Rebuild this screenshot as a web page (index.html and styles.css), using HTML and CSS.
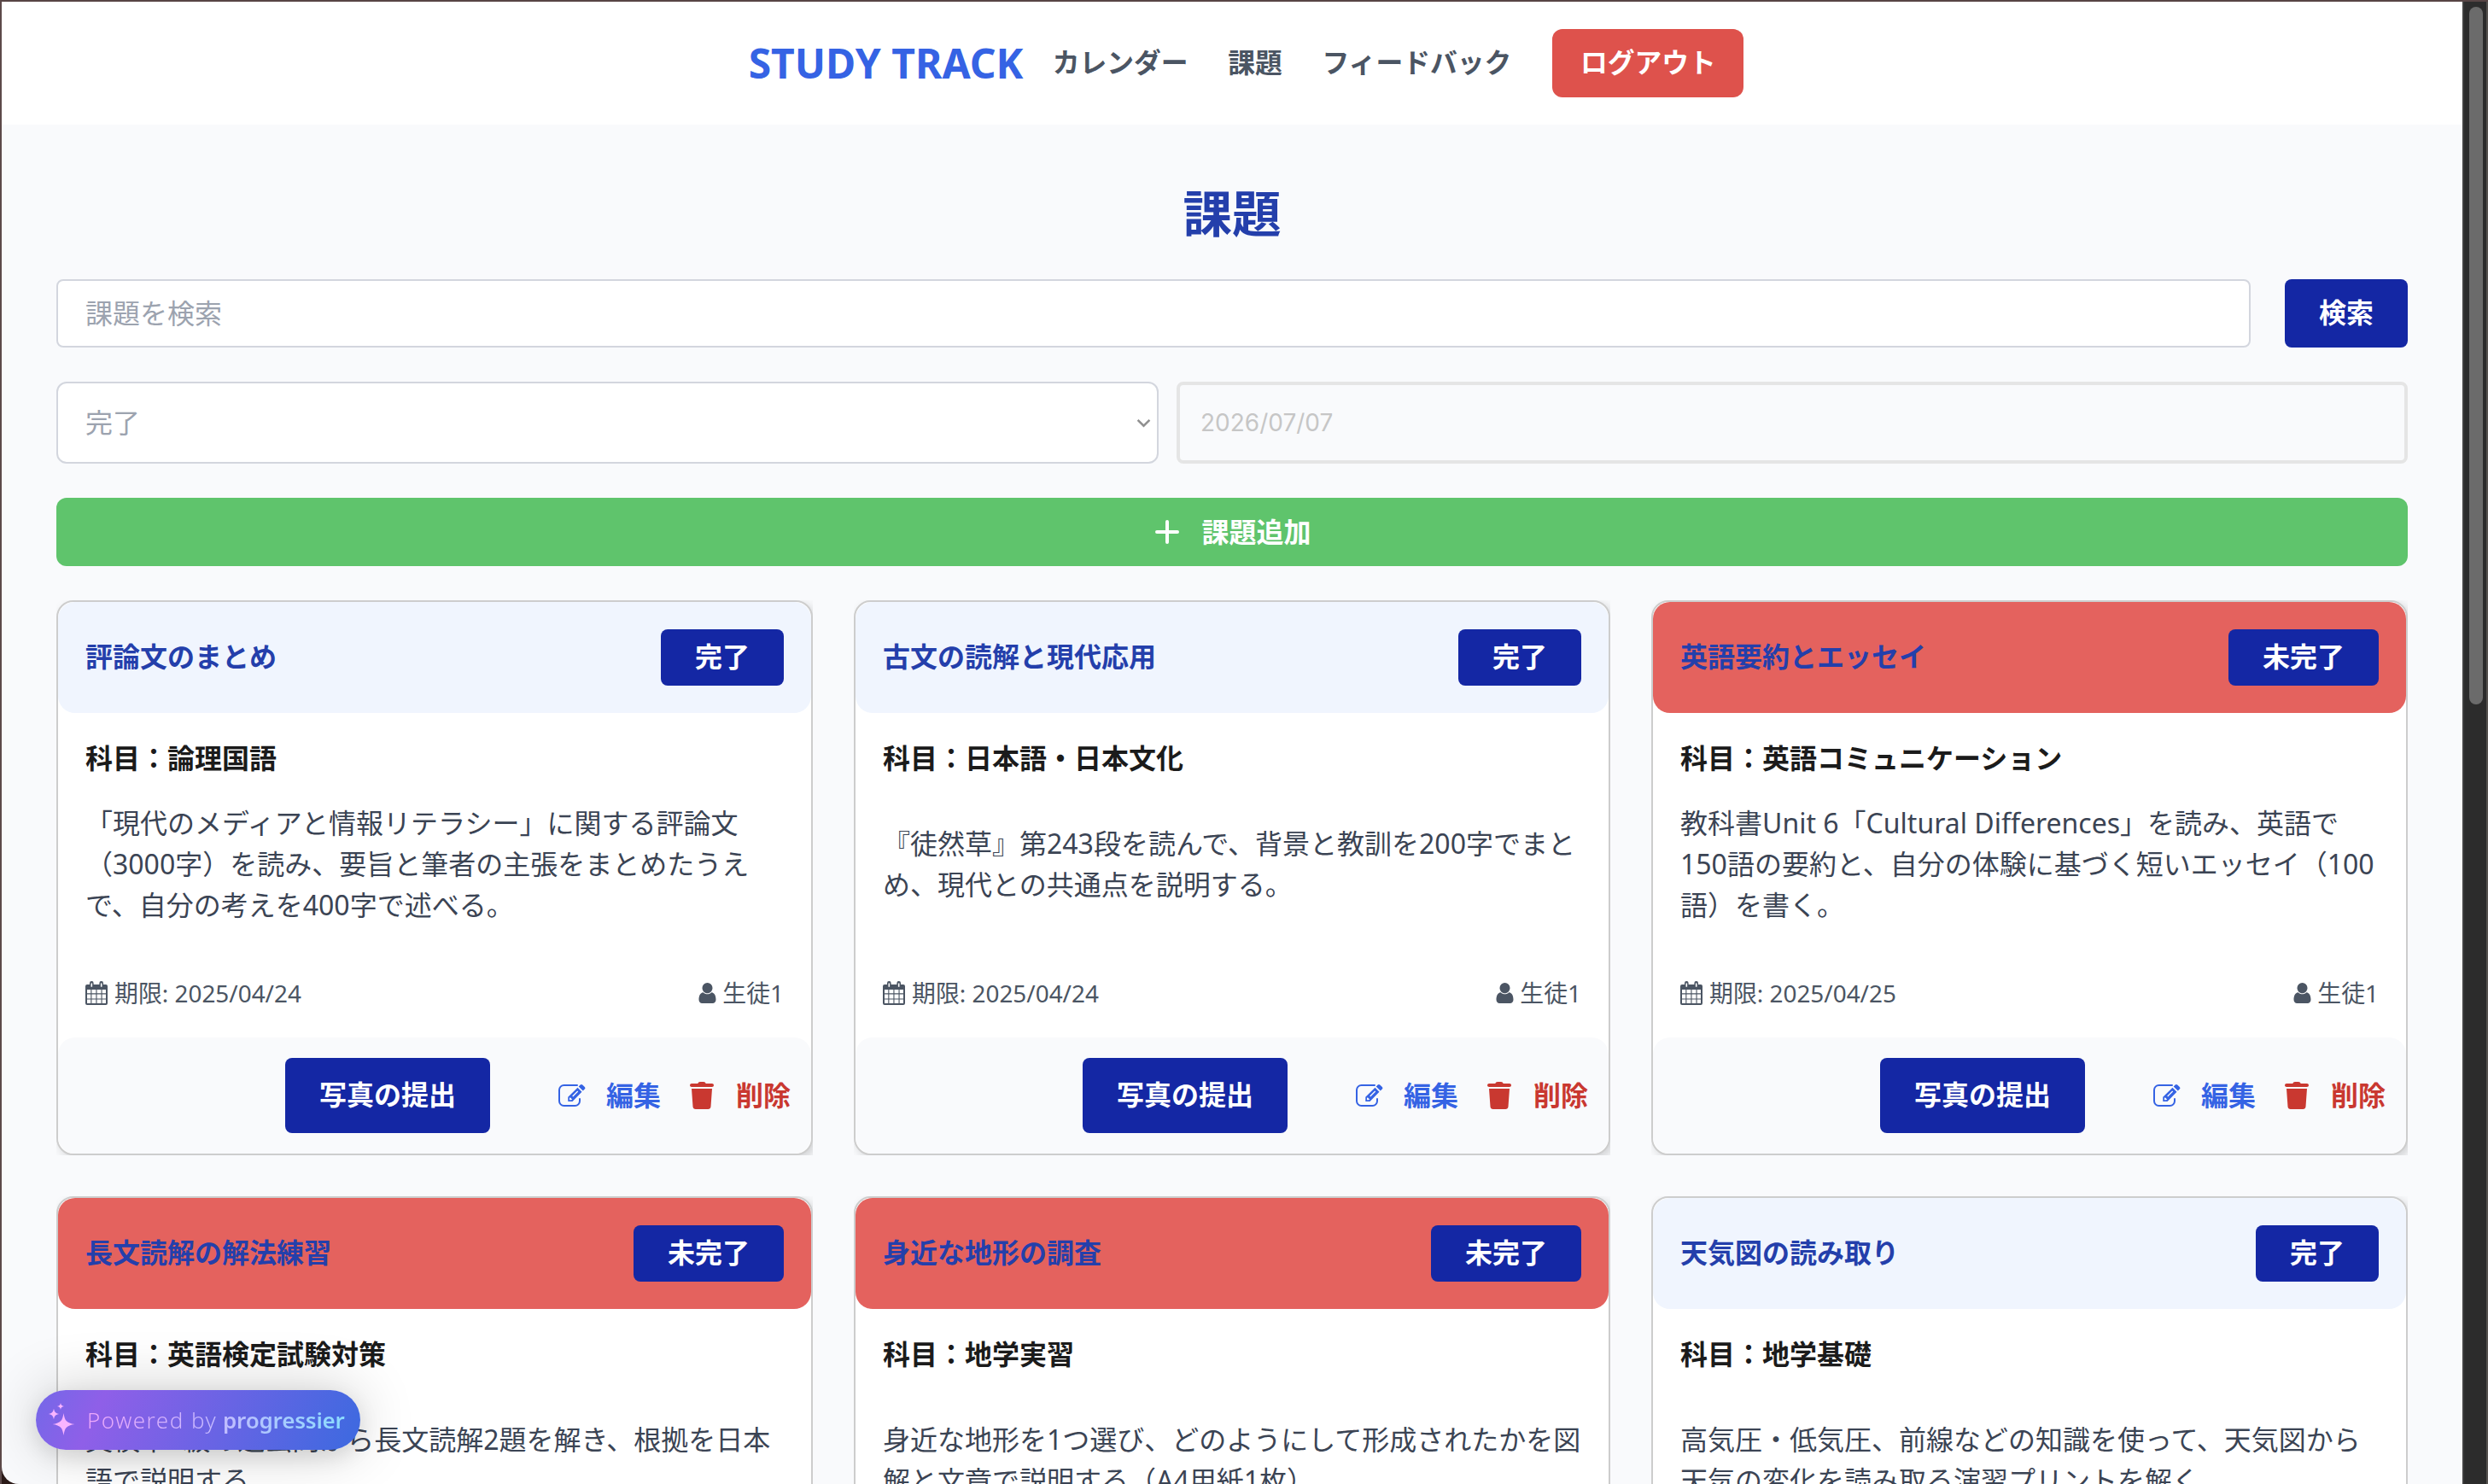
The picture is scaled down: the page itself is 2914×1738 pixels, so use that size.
FILE: index.html
```html
<!DOCTYPE html>
<html lang="ja">
<head>
<meta charset="utf-8">
<title>STUDY TRACK - 課題</title>
<link rel="stylesheet" href="styles.css">
</head>
<body>
<svg class="sprite" aria-hidden="true">
  <symbol id="i-cal" viewBox="0 0 26 28"><path fill="currentColor" fill-rule="evenodd" d="M2 4h3V2.300a2.300 2.300 0 0 1 4.600 0V4h6.800V2.300a2.300 2.300 0 0 1 4.600 0V4h3a2 2 0 0 1 2 2v20a2 2 0 0 1-2 2H2a2 2 0 0 1-2-2V6a2 2 0 0 1 2-2zM6.500 2.500v4.300h1.600V2.500zM17.900 2.500v4.300h1.600V2.500zM2 10v4.300h4.300V10zM7.400 10v4.300h5V10zM13.500 10v4.300h5V10zM19.600 10v4.300H24V10zM2 15.400v5h4.300v-5zM7.400 15.400v5h5v-5zM13.500 15.400v5h5v-5zM19.600 15.400v5H24v-5zM2 21.500V26h4.300v-4.500zM7.400 21.500V26h5v-4.500zM13.500 21.500V26h5v-4.500zM19.600 21.500V26H24v-4.500z"/></symbol>
  <symbol id="i-user" viewBox="0 0 20 24"><path fill="currentColor" d="M10 0a6 6 0 0 1 6 6c0 3.300-2.700 6.300-6 6.300S4 9.300 4 6a6 6 0 0 1 6-6zM5.200 11.200c1.300 1.300 3 2.100 4.800 2.100s3.500-.8 4.800-2.100c3.700.4 5.200 4.300 5.200 8.500 0 2.500-1.600 4.300-3.800 4.300H3.800C1.600 24 0 22.200 0 19.700c0-4.200 1.500-8.100 5.200-8.500z"/></symbol>
  <symbol id="i-edit" viewBox="0 0 32 28"><path fill="none" stroke="currentColor" stroke-width="2" stroke-linecap="round" d="M22 2H6.500A5.500 5.500 0 0 0 1 7.500v13A5.500 5.500 0 0 0 6.500 26h13a5.500 5.500 0 0 0 5.500-5.500V18"/><path fill="currentColor" fill-rule="evenodd" d="M22.500 4.800l5 5L16.500 21H11.300v-5.200zM13 17v2.300h2.300l.8-.8-2.300-2.300zM16.200 14.500l1 .9 6-6-1-.9zM23.700 3.500l2-2a1.800 1.800 0 0 1 2.500 0l2.600 2.600a1.800 1.800 0 0 1 0 2.500l-2 2z"/></symbol>
  <symbol id="i-trash" viewBox="0 0 28 32"><path fill="currentColor" d="M2 2h7.300C9.800.8 10.500 0 12 0h4c1.500 0 2.200.8 2.700 2H26c1 0 2 .9 2 2s-1 2-2 2H2C1 6 0 5.100 0 4s1-2 2-2zM2 8h24l-1.500 21c-.1 1.700-1.500 3-3.200 3H6.700c-1.700 0-3.100-1.300-3.200-3z"/></symbol>
</svg>

<div class="window">
<div class="page">
  <header class="topbar">
    <div class="logo">STUDY TRACK</div>
    <nav class="nav"><a>カレンダー</a><a>課題</a><a>フィードバック</a></nav>
    <button class="logout">ログアウト</button>
  </header>

  <main class="main">
    <h1 class="title">課題</h1>
    <div class="search-row">
      <div class="field search">課題を検索</div>
      <button class="btn search-btn">検索</button>
    </div>
    <div class="filter-row">
      <div class="field select">完了<svg class="chev" viewBox="0 0 16 10"><path d="M1.500 1.500L8 8l6.500-6.500" fill="none" stroke="#909090" stroke-width="2.400"/></svg></div>
      <div class="date">2026/07/07</div>
    </div>
    <button class="add"><svg class="plus" viewBox="0 0 28 28"><path d="M14 2v24M2 14h24" stroke="#fff" stroke-width="4" stroke-linecap="round"/></svg>課題追加</button>

    <div class="grid">
      <div class="cell"><article class="card">
        <div class="card-head"><h2 class="name">評論文のまとめ</h2><button class="btn state">完了</button></div>
        <div class="card-body">
          <h3 class="subject">科目：論理国語</h3>
          <div class="desc"><p>「現代のメディアと情報リテラシー」に関する評論文（3000字）を読み、要旨と筆者の主張をまとめたうえで、自分の考えを400字で述べる。</p></div>
          <div class="meta"><span class="due"><svg class="cal"><use href="#i-cal"/></svg>期限: 2025/04/24</span><span class="who"><svg class="user"><use href="#i-user"/></svg>生徒1</span></div>
        </div>
        <div class="card-foot"><button class="btn photo">写真の提出</button><a class="edit"><svg><use href="#i-edit"/></svg>編集</a><a class="del"><svg><use href="#i-trash"/></svg>削除</a></div>
      </article></div>

      <div class="cell"><article class="card">
        <div class="card-head"><h2 class="name">古文の読解と現代応用</h2><button class="btn state">完了</button></div>
        <div class="card-body">
          <h3 class="subject">科目：日本語・日本文化</h3>
          <div class="desc"><p>『徒然草』第243段を読んで、背景と教訓を200字でまとめ、現代との共通点を説明する。</p></div>
          <div class="meta"><span class="due"><svg class="cal"><use href="#i-cal"/></svg>期限: 2025/04/24</span><span class="who"><svg class="user"><use href="#i-user"/></svg>生徒1</span></div>
        </div>
        <div class="card-foot"><button class="btn photo">写真の提出</button><a class="edit"><svg><use href="#i-edit"/></svg>編集</a><a class="del"><svg><use href="#i-trash"/></svg>削除</a></div>
      </article></div>

      <div class="cell"><article class="card">
        <div class="card-head todo"><h2 class="name">英語要約とエッセイ</h2><button class="btn state">未完了</button></div>
        <div class="card-body">
          <h3 class="subject">科目：英語コミュニケーション</h3>
          <div class="desc"><p>教科書Unit 6「Cultural Differences」を読み、英語で150語の要約と、自分の体験に基づく短いエッセイ（100語）を書く。</p></div>
          <div class="meta"><span class="due"><svg class="cal"><use href="#i-cal"/></svg>期限: 2025/04/25</span><span class="who"><svg class="user"><use href="#i-user"/></svg>生徒1</span></div>
        </div>
        <div class="card-foot"><button class="btn photo">写真の提出</button><a class="edit"><svg><use href="#i-edit"/></svg>編集</a><a class="del"><svg><use href="#i-trash"/></svg>削除</a></div>
      </article></div>

      <div class="cell"><article class="card">
        <div class="card-head todo"><h2 class="name">長文読解の解法練習</h2><button class="btn state">未完了</button></div>
        <div class="card-body">
          <h3 class="subject">科目：英語検定試験対策</h3>
          <div class="desc"><p>英検準1級の過去問から長文読解2題を解き、根拠を日本語で説明する。</p></div>
        </div>
      </article></div>

      <div class="cell"><article class="card">
        <div class="card-head todo"><h2 class="name">身近な地形の調査</h2><button class="btn state">未完了</button></div>
        <div class="card-body">
          <h3 class="subject">科目：地学実習</h3>
          <div class="desc"><p>身近な地形を1つ選び、どのようにして形成されたかを図解と文章で説明する（A4用紙1枚）</p></div>
        </div>
      </article></div>

      <div class="cell"><article class="card">
        <div class="card-head"><h2 class="name">天気図の読み取り</h2><button class="btn state">完了</button></div>
        <div class="card-body">
          <h3 class="subject">科目：地学基礎</h3>
          <div class="desc"><p>高気圧・低気圧、前線などの知識を使って、天気図から天気の変化を読み取る演習プリントを解く</p></div>
        </div>
      </article></div>
    </div>
  </main>
</div>
<div class="scroll"><div class="thumb"></div></div>
</div>

<div class="badge">
  <svg class="spark" viewBox="0 0 32 40"><path fill="#f9b4ff" d="M18.500 12c1.300 9 3.500 11.500 13 13-9.500 1.500-11.700 4-13 13-1.300-9-3.500-11.500-13-13 9.500-1.500 11.700-4 13-13zM7 6.500c.8 4.400 2 5.700 6.500 6.500-4.500.8-5.700 2-6.500 6.500C6.200 15 5 13.800.5 13 5 12.200 6.200 10.900 7 6.500zM15 0c.5 2.700 1.300 3.500 4 4-2.700.5-3.500 1.300-4 4-.5-2.700-1.300-3.500-4-4 2.700-.5 3.500-1.300 4-4z"/></svg>
  <span class="badge-text"><span class="by">Powered by</span> <b>progressier</b></span>
</div>
</body>
</html>
```
FILE: styles.css
```css
* { box-sizing: border-box; margin: 0; padding: 0; }
body {
  width: 2914px; height: 1738px; overflow: hidden; background: #2b1a18;
  font-family: "Noto Sans", "Noto Sans CJK JP", sans-serif;
  font-size: 32px; line-height: 48px; color: #3b4454;
}
button { font: inherit; border: 0; display: block; white-space: nowrap; }
svg { display: block; flex: none; }
.sprite { position: absolute; width: 0; height: 0; }
.window {
  height: 1738px; display: flex; border-top: 2px solid #574545;
  border-left: 2px solid #5d4a4a;
}
.page { width: 2882px; height: 1736px; overflow: hidden; background: #f9fafc; border-bottom-left-radius: 20px; }
.scroll { width: 30px; background: #2c2c2c; border-left: 2px solid #404040; border-right: 2px solid #55524f; padding: 6px 4px 0 6px; }
.thumb { width: 16px; height: 817px; border-radius: 8px; background: #6b6b6b; }

.topbar {
  height: 144px; background: #fff; display: flex; align-items: center; justify-content: center;
  padding-left: 33px;
}
.logo { font-size: 48px; font-weight: 700; color: #3563e4; white-space: nowrap; width: 324px; }
.nav { display: flex; gap: 46.600px; font-size: 31.800px; font-weight: 600; color: #4b5563; margin: 0 48px 0 32px; padding-bottom: 2px; white-space: nowrap; }
.logout { background: #de524c; color: #fff; height: 80px; width: 224px; border-radius: 12px; font-size: 31.800px; font-weight: 600; padding-bottom: 2px; }

.main { padding: 0 64px; }
.title { font-size: 57.600px; line-height: 86px; font-weight: 700; color: #243fab; text-align: center; padding: 61px 0 34px; }
.btn { background: #1427a4; color: #fff; font-weight: 600; border-radius: 8px; text-align: center; padding-bottom: 2px; }
.search-row { display: flex; gap: 40px; margin-bottom: 40px; }
.field { background: #fff; border: 2px solid #d3d6de; border-radius: 8px; color: #9ca3af; padding: 0 32px; display: flex; align-items: center; }
.search { flex: 1; height: 80px; }
.search-btn { width: 144px; height: 80px; }
.filter-row { display: flex; gap: 21px; height: 96px; margin-bottom: 40px; }
.select { width: 1291px; border-radius: 12px; justify-content: space-between; padding-right: 7px; }
.chev { width: 17px; height: 11px; }
.date { flex: 1; border: 4px solid #e5e5e5; border-radius: 8px; font-family: Inter, sans-serif; font-size: 28px; line-height: 88px; color: #c6c6c6; padding-left: 24px; }
.add { width: 100%; height: 80px; border-radius: 12px; background: #5fc46c; color: #fff; font-weight: 600; display: flex; align-items: center; justify-content: center; gap: 26px; margin-bottom: 40px; padding-left: 3px; }
.plus { width: 28px; height: 28px; }

.grid { display: grid; grid-template-columns: repeat(3, 886px); gap: 48px; }
.cell { height: 650px; overflow: hidden; }
.card {
  height: 650px; border: 2px solid #cdcdcd; border-radius: 20px; background: #fff;
  box-shadow: 4px 4px 12px rgba(0, 0, 0, .16); display: flex; flex-direction: column;
}
.card-head { height: 130px; background: #f0f5fe; border-radius: 20px; padding: 32px; display: flex; justify-content: space-between; align-items: center; }
.card-head.todo { background: #e4625e; }
.name { font-size: 32px; font-weight: 600; color: #243fab; padding-bottom: 2px; }
.state { height: 66px; padding: 0 40px 2px; line-height: 62px; }
.card-body { flex: 1; padding: 29px 32px 0; }
.subject { font-size: 32px; font-weight: 700; color: #1b1b1b; }
.desc { height: 144px; margin-top: 28px; display: flex; align-items: center; }
.meta { display: flex; justify-content: space-between; margin-top: 55px; font-size: 27.900px; color: #4b5563; }
.due, .who { display: flex; align-items: center; gap: 8px; }
.who { gap: 7px; }
.cal { width: 26px; height: 28px; }
.user { width: 21px; height: 24px; }
.card-foot { height: 136px; border-radius: 20px; background: #f9fafc; padding: 0 24px; display: flex; align-items: center; justify-content: flex-end; font-weight: 600; }
.photo { width: 240px; height: 88px; }
.edit, .del { display: flex; align-items: center; }
.edit { color: #3563e4; margin-left: 80px; gap: 24px; }
.edit svg { width: 32px; height: 28px; }
.del { color: #c93830; margin-left: 34px; gap: 26px; }
.del svg { width: 28px; height: 32px; }

.badge {
  position: absolute; left: 42px; top: 1628px; width: 380px; height: 70px; border-radius: 35px;
  background: linear-gradient(115deg, #7468e8 0%, #8f5fe8 20%, #4169e0 95%);
  box-shadow: 0 0 70px rgba(0, 0, 0, .2), 0 8px 24px rgba(0, 0, 0, .1);
  display: flex; align-items: center; padding-left: 14px; gap: 14px;
}
.spark { width: 32px; height: 40px; }
.badge-text {
  font-size: 26px; line-height: 40px; white-space: nowrap;
  background: linear-gradient(90deg, #efa8fb, #c4baff 50%, #8bdcff); background-clip: text; -webkit-background-clip: text; color: transparent;
}
.by { font-weight: 300; letter-spacing: 1.500px; }
.badge-text b { font-weight: 600; letter-spacing: -.2px; }
```
